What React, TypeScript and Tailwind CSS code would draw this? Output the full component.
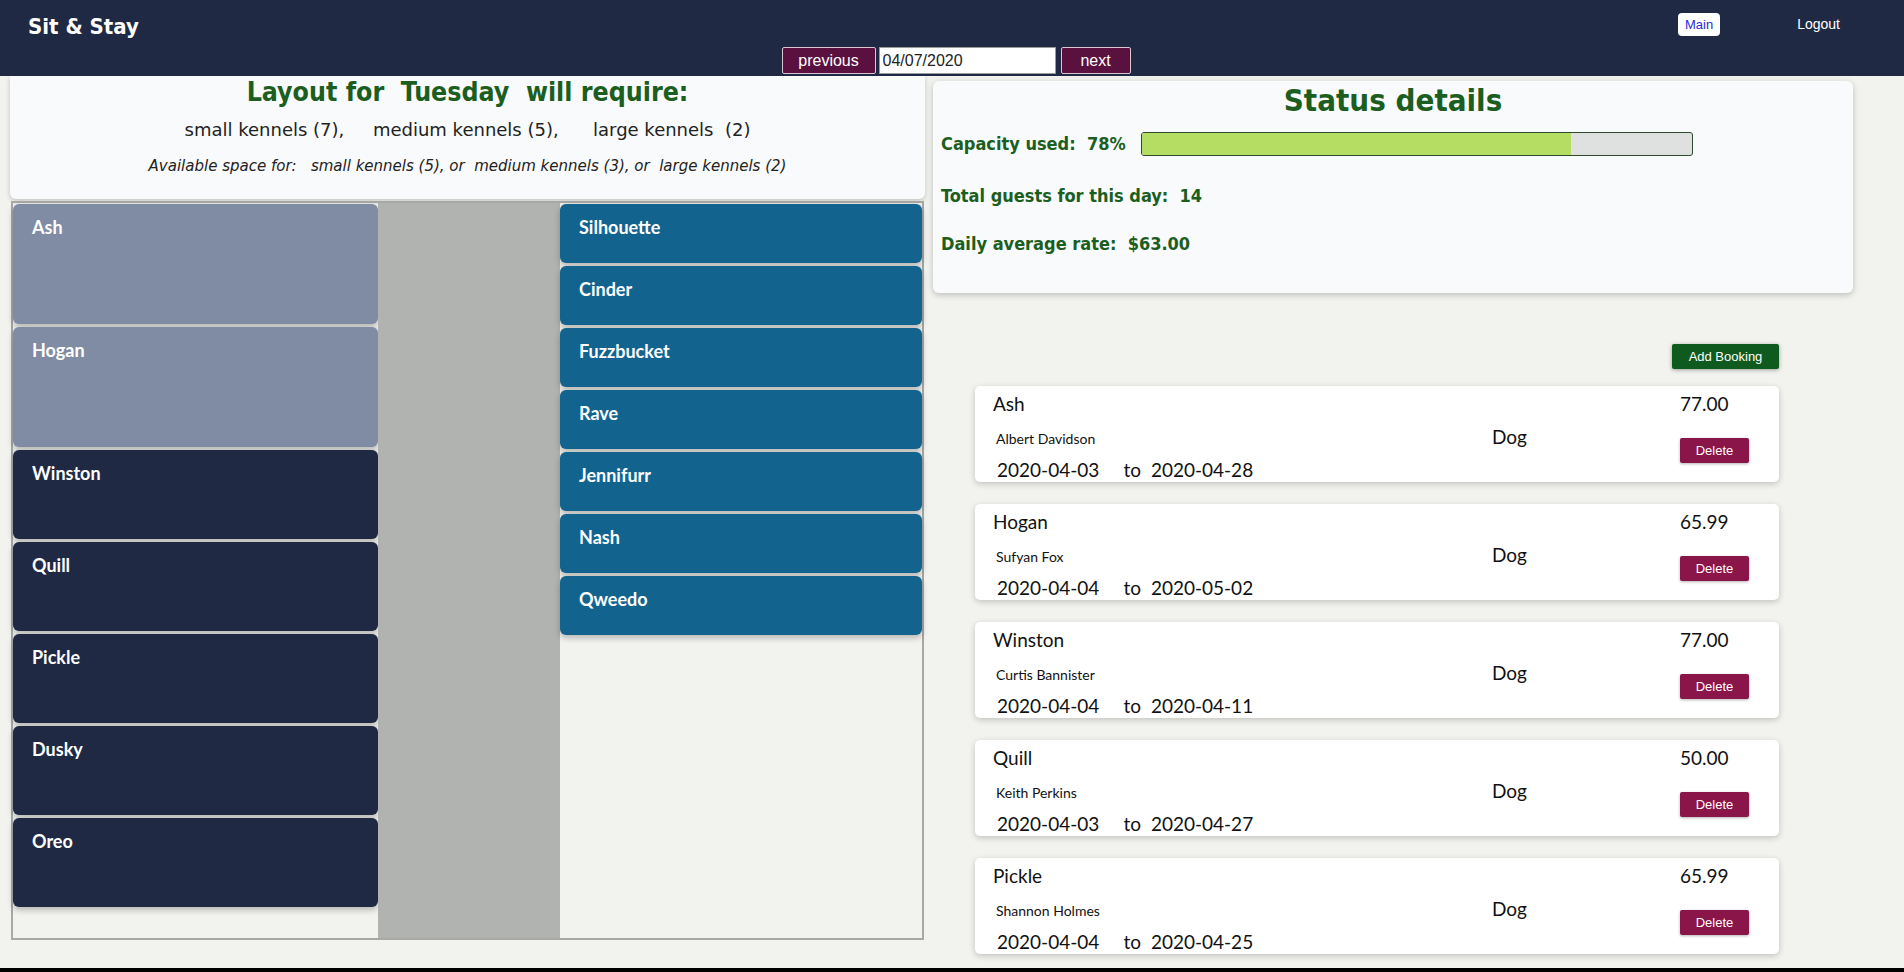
import React from 'react';

const largeKennels = ['Ash', 'Hogan'];
const smallKennels = ['Winston', 'Quill', 'Pickle', 'Dusky', 'Oreo'];
const mediumKennels = ['Silhouette', 'Cinder', 'Fuzzbucket', 'Rave', 'Jennifurr', 'Nash', 'Qweedo'];

const bookings = [
  { pet: 'Ash', owner: 'Albert Davidson', price: '77.00', from: '2020-04-03', to: '2020-04-28' },
  { pet: 'Hogan', owner: 'Sufyan Fox', price: '65.99', from: '2020-04-04', to: '2020-05-02' },
  { pet: 'Winston', owner: 'Curtis Bannister', price: '77.00', from: '2020-04-04', to: '2020-04-11' },
  { pet: 'Quill', owner: 'Keith Perkins', price: '50.00', from: '2020-04-03', to: '2020-04-27' },
  { pet: 'Pickle', owner: 'Shannon Holmes', price: '65.99', from: '2020-04-04', to: '2020-04-25' },
];

const Kennel = ({ name, className }: { name: string; className: string }) => (
  <div
    className={`rounded-[6px] px-[19px] pt-[10px] text-[18px] font-bold text-white font-['Lato',sans-serif] shadow-[0_3px_6px_rgba(0,0,0,0.25)] ${className}`}
  >
    {name}
  </div>
);

const Navbar = () => (
  <nav className="h-[76px] shrink-0 bg-[#1f2944] relative font-['Liberation_Sans',Arial,sans-serif]">
    <div className="absolute left-[28px] top-[10px] text-[22px] font-bold text-white font-['DejaVu_Sans_Condensed','DejaVu_Sans',sans-serif]">
      Sit &amp; Stay
    </div>
    <div className="absolute right-[64px] top-[13px] flex items-center gap-[77px]">
      <button className="h-[23px] rounded-[4px] bg-white px-[7px] text-[13px] text-[#2b2bd6]">Main</button>
      <span className="text-[14px] text-white">Logout</span>
    </div>
    <div className="flex justify-center gap-[3px] pt-[47px] pl-[8px]">
      <button className="h-[27px] w-[94px] rounded-[2px] border border-[#d9c6d0] bg-[#5b1140] text-[16px] text-white">
        previous
      </button>
      <input
        readOnly
        value="04/07/2020"
        className="h-[27px] w-[177px] border border-[#9a9a9a] bg-white px-[3px] text-[16px] text-[#222] outline-none"
      />
      <button className="ml-[2px] h-[27px] w-[70px] rounded-[2px] border border-[#d9c6d0] bg-[#5b1140] text-[16px] text-white">
        next
      </button>
    </div>
  </nav>
);

const LayoutPanel = () => (
  <section className="ml-[10px] w-[915px] shrink-0">
    <div className="h-[123px] rounded-b-[6px] bg-[#f9fafb] pt-[1px] shadow-[0_2px_5px_rgba(0,0,0,0.2)] text-center">
      <h1 className="text-[26.5px] font-bold leading-[30px] text-[#1b5e20] whitespace-pre font-['DejaVu_Sans_Condensed','DejaVu_Sans',sans-serif]">
        Layout for  Tuesday  will require:
      </h1>
      <p className="mt-[12px] text-[18px] leading-[22px] text-[#222] whitespace-pre font-['DejaVu_Sans',sans-serif]">
        small kennels (7),     medium kennels (5),      large kennels  (2)
      </p>
      <p className="mt-[16px] text-[15px] italic leading-[18px] text-[#222] whitespace-pre font-['DejaVu_Sans',sans-serif]">
        Available space for:   small kennels (5), or  medium kennels (3), or  large kennels (2)
      </p>
    </div>
    <div className="mt-[2px] ml-[1px] flex h-[739px] w-[913px] border-2 border-[#a8a9a7]">
      <div className="flex w-[365px] flex-col gap-[3px] pt-[1px]">
        {largeKennels.map((n) => (
          <Kennel key={n} name={n} className="h-[120px] bg-[#7f8ca4]" />
        ))}
        {smallKennels.map((n) => (
          <Kennel key={n} name={n} className="h-[89px] bg-[#1f2944]" />
        ))}
      </div>
      <div className="w-[182px] bg-[#b1b3b0]" />
      <div className="flex flex-1 flex-col gap-[3px] pt-[1px]">
        {mediumKennels.map((n) => (
          <Kennel key={n} name={n} className="h-[59px] bg-[#13638f]" />
        ))}
      </div>
    </div>
  </section>
);

const StatusPanel = () => (
  <div className="mt-[5px] h-[212px] w-[920px] rounded-[6px] bg-[#f9fafb] px-[8px] shadow-[0_2px_6px_rgba(0,0,0,0.22)] font-['DejaVu_Sans_Condensed','DejaVu_Sans',sans-serif] text-[#1b5e20]">
    <h2 className="pt-[1px] text-center text-[31px] font-bold leading-[36px]">Status details</h2>
    <div className="mt-[12px] flex items-center text-[18px] font-bold">
      <span className="w-[200px] whitespace-pre">Capacity used:  78%</span>
      <div className="h-[24px] w-[552px] overflow-hidden rounded-[3px] border border-[#2d4a2d] bg-[#dfe0e0]">
        <div className="h-full w-[78%] bg-[#b5dc63]" />
      </div>
    </div>
    <p className="mt-[27px] text-[18px] leading-[24px] font-bold whitespace-pre">Total guests for this day:  14</p>
    <p className="mt-[24px] text-[18px] leading-[24px] font-bold whitespace-pre">Daily average rate:  $63.00</p>
  </div>
);

const BookingCard = ({ b }: { b: (typeof bookings)[number] }) => (
  <div className="flex h-[96px] w-[804px] overflow-hidden rounded-[5px] bg-white shadow-[0_2px_6px_rgba(0,0,0,0.2)] font-['Lato',sans-serif] text-[#111]">
    <div className="w-[517px] pl-[18px]">
      <div className="pt-[6px] text-[19px] leading-[24px]">{b.pet}</div>
      <div className="mt-[14px] pl-[3px] text-[14px] leading-[18px]">{b.owner}</div>
      <div className="mt-[10px] pl-[4px] text-[19px] leading-[24px] whitespace-pre">
        {b.from}{'     '}to  {b.to}
      </div>
    </div>
    <div className="w-[188px] pt-[38px] text-[19px] leading-[26px]">Dog</div>
    <div className="flex flex-col items-start">
      <div className="pt-[6px] text-[19px] leading-[24px]">{b.price}</div>
      <button className="mt-[22px] h-[25px] w-[69px] rounded-[2px] bg-[#8a1549] text-[13px] text-white shadow-[0_1px_3px_rgba(0,0,0,0.3)] font-['Liberation_Sans',Arial,sans-serif]">
        Delete
      </button>
    </div>
  </div>
);

const BookingsPanel = () => (
  <div className="ml-[42px] mt-[51px] w-[804px]">
    <div className="flex justify-end">
      <button className="h-[25px] w-[107px] rounded-[2px] bg-[#0f5a1e] text-[13px] text-white shadow-[0_1px_4px_rgba(0,0,0,0.35)] font-['Liberation_Sans',Arial,sans-serif]">
        Add Booking
      </button>
    </div>
    <div className="mt-[17px] flex flex-col gap-[22px]">
      {bookings.map((b) => (
        <BookingCard key={b.pet} b={b} />
      ))}
    </div>
  </div>
);

export default function App() {
  return (
    <div className="flex h-[972px] w-full flex-col overflow-hidden bg-[#f2f3ee]">
      <Navbar />
      <main className="flex flex-1 overflow-hidden">
        <LayoutPanel />
        <section className="ml-[8px] w-[920px]">
          <StatusPanel />
          <BookingsPanel />
        </section>
      </main>
      <div className="h-[4px] shrink-0 bg-black" />
    </div>
  );
}
